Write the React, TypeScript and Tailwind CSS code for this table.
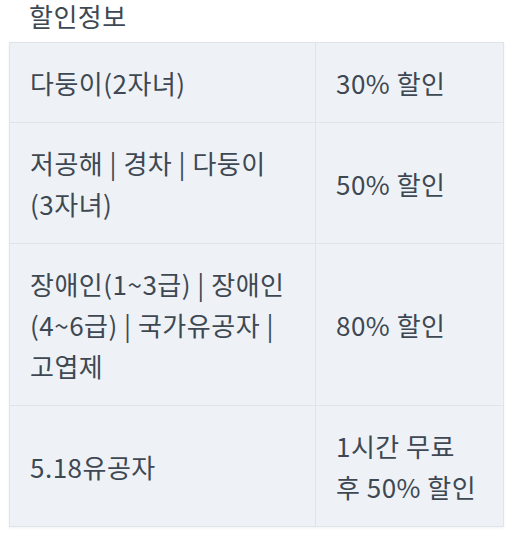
import React from 'react';

const rows: { label: string; value: React.ReactNode }[] = [
  { label: '다둥이(2자녀)', value: '30% 할인' },
  { label: '저공해 | 경차 | 다둥이 (3자녀)', value: '50% 할인' },
  { label: '장애인(1~3급) | 장애인 (4~6급) | 국가유공자 | 고엽제', value: '80% 할인' },
  {
    label: '5.18유공자',
    value: (
      <>
        1시간 무료
        <br />
        후 50% 할인
      </>
    ),
  },
];

const App: React.FC = () => {
  return (
    <div
      className="w-[514px] h-[534px] bg-white text-[#3e4853] tracking-[0.5px]"
      style={{ fontFamily: '"Noto Sans CJK KR", "Noto Sans", sans-serif' }}
    >
      <h2 className="pl-[29px] text-[26px] leading-[32px] font-normal">할인정보</h2>
      <table className="ml-[9px] mt-[10px] w-[495px] border-collapse bg-[#eef2f6] border border-[#dfe4ea] shadow-[0_1px_3px_rgba(0,0,0,0.06)] text-[26px] leading-[41px] break-keep">
        <tbody>
          {rows.map((row, i) => (
            <tr key={i}>
              <td className="w-[306px] border border-[#dfe4ea] pl-5 pr-3 py-[19px] align-middle">
                {row.label}
              </td>
              <td className="border border-[#dfe4ea] px-5 py-[19px] align-middle">{row.value}</td>
            </tr>
          ))}
        </tbody>
      </table>
    </div>
  );
};

export default App;
